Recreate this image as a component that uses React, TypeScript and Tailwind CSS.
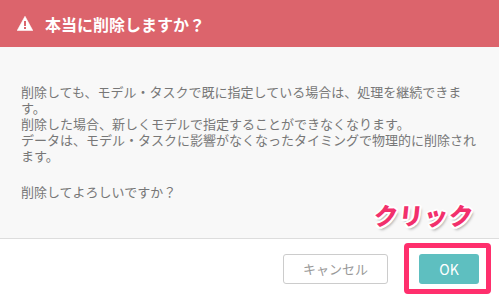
import React from 'react';

function WarningIcon() {
  return (
    <svg width="16" height="15" viewBox="0 0 16 15" className="shrink-0">
      <path d="M8 0.3 L15.8 14.6 L0.2 14.6 Z" fill="#fff" strokeLinejoin="round" stroke="#fff" strokeWidth="0.6" />
      <rect x="7" y="5" width="2" height="5" fill="#dc646c" />
      <rect x="7" y="11" width="2" height="2" fill="#dc646c" />
    </svg>
  );
}

export default function App() {
  return (
    <div
      className="relative w-[499px] h-[299px] overflow-hidden bg-white"
      style={{ fontFamily: '"Noto Sans CJK JP", "Noto Sans", sans-serif' }}
    >
      {/* Header */}
      <div className="h-[47px] bg-[#dc646c] flex items-center pl-[17px] gap-[12px]">
        <WarningIcon />
        <h2 className="text-white font-bold text-[16px] leading-none">本当に削除しますか？</h2>
      </div>

      {/* Body */}
      <div className="h-[192px] bg-[#f8f8f8] border-b border-[#dddddd] pt-[37px] px-[21px] text-[13px] leading-[16px] text-[#777777]">
        <p>
          削除しても、モデル・タスクで既に指定している場合は、処理を継続できます。
          <br />
          削除した場合、新しくモデルで指定することができなくなります。
          <br />
          データは、モデル・タスクに影響がなくなったタイミングで物理的に削除されます。
        </p>
        <p className="mt-[20px]">削除してよろしいですか？</p>
      </div>

      {/* Footer */}
      <div className="h-[60px] flex items-center justify-end pr-[20px] gap-[31px]">
        <button className="w-[105px] h-[30px] border border-[#cccccc] rounded-[3px] bg-white text-[#999999] text-[13px]">
          キャンセル
        </button>
        <button className="w-[60px] h-[30px] rounded-[3px] bg-[#5ebfc0] text-white text-[14px]">OK</button>
      </div>

      {/* Annotation */}
      <div className="absolute left-[404px] top-[243px] w-[87px] h-[51px] border-[5px] border-[#ff2f6d] rounded-[4px]" />
      <div
        className="absolute left-[374px] top-[203px] text-[24px] font-black text-[#f2306c] leading-none -skew-x-6 tracking-[1px]"
        style={{
          textShadow:
            '1.5px 1.5px 0 #fff, -1.5px 1.5px 0 #fff, 1.5px -1.5px 0 #fff, -1.5px -1.5px 0 #fff, 0 2px 0 #fff, 2px 0 0 #fff, 0 -2px 0 #fff, -2px 0 0 #fff, 2px 3px 3px rgba(0,0,0,0.35)',
        }}
      >
        クリック
      </div>
    </div>
  );
}
